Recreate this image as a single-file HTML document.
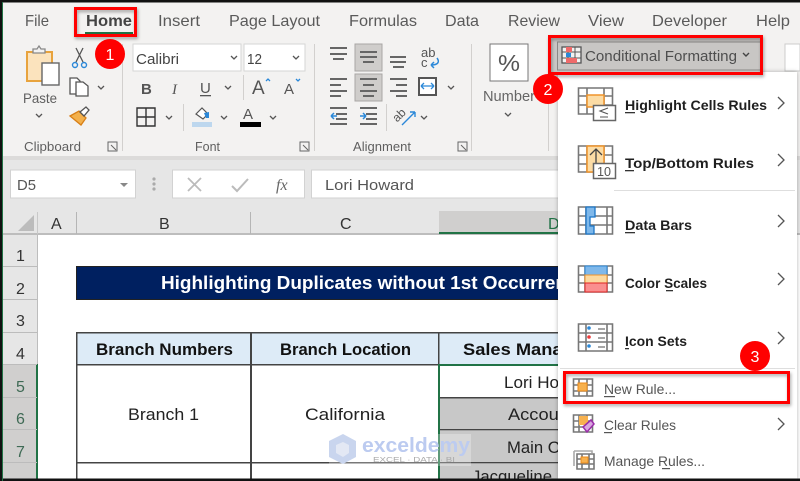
<!DOCTYPE html>
<html><head><meta charset="utf-8"><style>
html,body{margin:0;padding:0;background:#fff;width:800px;height:481px;overflow:hidden}
svg{display:block}
text{font-family:"Liberation Sans",sans-serif}
.t{font-size:16px;fill:#5a5a5a}
.g{font-size:13px;fill:#5f5f5f}
.m{font-size:14px;font-weight:bold;fill:#1f1f1f}
.n{font-size:14px;fill:#555}
.s{font-size:17px;fill:#222}
.b{font-size:17px;font-weight:bold;fill:#111}
.h{font-size:16px;fill:#333}
.ln{stroke:#666;stroke-width:2;fill:none}
.ch{stroke:#555;stroke-width:1.3;fill:none}
</style></head><body>
<svg width="800" height="481" viewBox="0 0 800 481" xmlns="http://www.w3.org/2000/svg">
<defs><filter id="sh" x="-10%" y="-30%" width="120%" height="160%"><feDropShadow dx="1" dy="2" stdDeviation="1.5" flood-color="#000" flood-opacity=".35"/></filter>
<filter id="ms" x="-5%" y="-5%" width="110%" height="110%"><feDropShadow dx="0" dy="0" stdDeviation="2" flood-color="#000" flood-opacity=".3"/></filter></defs>
<rect width="800" height="481" fill="#fff"/>
<!-- ribbon -->
<rect x="0" y="2" width="800" height="156" fill="#f3f2f1"/>
<rect x="0" y="156" width="800" height="4" fill="#dcdbda"/>
<rect x="0" y="160" width="800" height="75" fill="#e6e6e6"/>
<!-- tabs -->
<text class="t" x="25" y="26" textLength="24" lengthAdjust="spacingAndGlyphs">File</text>
<text class="t" x="86" y="26" textLength="46" lengthAdjust="spacingAndGlyphs" style="font-weight:bold;fill:#444">Home</text>
<text class="t" x="158" y="26" textLength="42" lengthAdjust="spacingAndGlyphs">Insert</text>
<text class="t" x="229" y="26" textLength="91" lengthAdjust="spacingAndGlyphs">Page Layout</text>
<text class="t" x="349" y="26" textLength="68" lengthAdjust="spacingAndGlyphs">Formulas</text>
<text class="t" x="445" y="26" textLength="34" lengthAdjust="spacingAndGlyphs">Data</text>
<text class="t" x="508" y="26" textLength="52" lengthAdjust="spacingAndGlyphs">Review</text>
<text class="t" x="588" y="26" textLength="36" lengthAdjust="spacingAndGlyphs">View</text>
<text class="t" x="652" y="26" textLength="75" lengthAdjust="spacingAndGlyphs">Developer</text>
<text class="t" x="756" y="26" textLength="34" lengthAdjust="spacingAndGlyphs">Help</text>
<rect x="85" y="32" width="48" height="2.5" fill="#217346"/>
<rect x="75.500" y="8.500" width="60" height="27" fill="none" stroke="#f00" stroke-width="3" filter="url(#sh)"/>
<!-- clipboard -->
<path d="M27 52h25v29H27z" fill="#fbe3bd" stroke="#e8a33d" stroke-width="2"/>
<path d="M33 52v-3h4l2-3 2 3h4v4h-12z" fill="#f3f2f1" stroke="#888" stroke-width="1.3"/>
<rect x="42" y="63" width="17" height="22" fill="#fff" stroke="#666" stroke-width="1.4"/>
<text class="g" x="23" y="103" textLength="34" lengthAdjust="spacingAndGlyphs" style="font-size:14px">Paste</text>
<path class="ch" d="M36 114l3 3 3-3"/>
<path d="M76 48l7 14M83 48l-7 14" stroke="#555" stroke-width="1.3" fill="none"/>
<circle cx="75" cy="65" r="2.5" fill="none" stroke="#2b88d8" stroke-width="1.4"/><circle cx="84" cy="65" r="2.5" fill="none" stroke="#2b88d8" stroke-width="1.4"/>
<path d="M70 78h7l3 3v13H70z" fill="#fff" stroke="#555" stroke-width="1.3"/><path d="M76 82h7l5 4v10H76z" fill="#fff" stroke="#555" stroke-width="1.3"/>
<path class="ch" d="M98 86l3 3 3-3"/>
<path d="M70 116l9-5 7 7-5 7z" fill="#f3b04b" stroke="#d87f16" stroke-width="1.3"/><path d="M80 112l6-5 3 3-5 6z" fill="#fff" stroke="#555" stroke-width="1.3"/>
<text class="g" x="24" y="151" textLength="57" lengthAdjust="spacingAndGlyphs">Clipboard</text>
<path d="M108 142h9v9h-9zM111 145l5 5" fill="none" stroke="#666"/>
<rect x="122" y="44" width="1" height="107" fill="#d2d0ce"/>
<!-- font -->
<rect x="133" y="44" width="108" height="27" fill="#fff" stroke="#d5d5d5"/>
<text x="136" y="64" textLength="43" lengthAdjust="spacingAndGlyphs" style="font-size:15px;fill:#444">Calibri</text>
<path d="M231 56l3 3 3-3" class="ch" stroke-width="1.5"/>
<rect x="244" y="44" width="61" height="27" fill="#fff" stroke="#d5d5d5"/>
<text x="247" y="64" textLength="15" lengthAdjust="spacingAndGlyphs" style="font-size:15px;fill:#444">12</text>
<path d="M293 56l3 3 3-3" class="ch"/>
<text x="141" y="94" style="font-size:15px;font-weight:bold;fill:#555">B</text>
<text x="172" y="94" style="font-size:15px;font-family:'Liberation Serif';font-style:italic;fill:#555">I</text>
<text x="200" y="93" style="font-size:15px;fill:#555">U</text><rect x="200" y="95" width="11" height="1.3" fill="#555"/>
<path class="ch" d="M225 86l3 3 3-3"/>
<rect x="243" y="75" width="1" height="25" fill="#d2d0ce"/>
<text x="252" y="94" style="font-size:19px;fill:#555">A</text>
<path d="M266 81l2-2 2 2" stroke="#2b88d8" stroke-width="1.3" fill="none"/>
<text x="284" y="94" style="font-size:15px;fill:#555">A</text>
<path d="M296 79l2 2 2-2" stroke="#2b88d8" stroke-width="1.3" fill="none"/>
<path d="M137 108h18v18h-18zM146 108v18M137 117h18" fill="none" stroke="#333" stroke-width="1.4"/>
<path class="ch" d="M166 116l3 3 3-3"/>
<rect x="183" y="104" width="1" height="27" fill="#d2d0ce"/>
<path d="M196 114l6-6 6 6-5 5z" fill="#fff" stroke="#555" stroke-width="1.2"/><path d="M204 113l5-1v6h-3z" fill="#2b88d8"/>
<rect x="192" y="122" width="20" height="5" fill="#bdd7ee"/>
<path class="ch" d="M221 116l3 3 3-3"/>
<text x="243" y="119" style="font-size:15px;fill:#555">A</text>
<rect x="240" y="122" width="21" height="5" fill="#000"/>
<path class="ch" d="M270 116l3 3 3-3"/>
<text class="g" x="195" y="151" textLength="25" lengthAdjust="spacingAndGlyphs">Font</text>
<path d="M300 142h9v9h-9zM303 145l5 5" fill="none" stroke="#666"/>
<rect x="314" y="44" width="1" height="107" fill="#d2d0ce"/>
<!-- alignment -->
<rect x="355" y="44" width="27" height="27" fill="#cfcdcb" stroke="#a9a7a5"/>
<rect x="355" y="74" width="27" height="27" fill="#cfcdcb" stroke="#a9a7a5"/>
<path class="ln" d="M330 48h17M330 54h17M333 59h11"/>
<path class="ln" d="M360 52h17M360 57h17M363 62h11"/>
<path class="ln" d="M390 57h16M390 62h16M393 67h11"/>
<path class="ln" d="M330 79h17M330 85h11M330 91h17M330 96h11"/>
<path class="ln" d="M360 79h17M363 85h11M360 91h17M363 96h11"/>
<path class="ln" d="M390 79h17M396 85h11M390 91h17M396 96h11"/>
<path class="ln" d="M330 108h17M336 114h11M336 119h11M330 124h17" stroke-width="1.7"/>
<path d="M331 116h6M331 116l3-3M331 116l3 3" stroke="#2b88d8" stroke-width="1.5" fill="none"/>
<path class="ln" d="M360 108h17M366 114h11M366 119h11M360 124h17" stroke-width="1.7"/>
<path d="M360 116h6M366 116l-3-3M366 116l-3 3" stroke="#2b88d8" stroke-width="1.5" fill="none"/>
<rect x="386" y="104" width="1" height="27" fill="#d2d0ce"/>
<text x="421" y="57" style="font-size:13px;fill:#555">ab</text><text x="421" y="67" style="font-size:13px;fill:#555">c</text>
<path d="M437 58c3 4 1 7-6 7M431 65l3-3M431 65l3 3" stroke="#2b88d8" stroke-width="1.5" fill="none"/>
<rect x="419" y="78" width="17" height="17" fill="#fff" stroke="#555" stroke-width="2"/>
<path d="M421 86h13M421 86l3-3M421 86l3 3M434 86l-3-3M434 86l-3 3" stroke="#2b88d8" stroke-width="1.3" fill="none"/>
<path class="ch" d="M448 86l3 3 3-3"/>
<text x="394" y="119" transform="rotate(-45 400 117)" style="font-size:12px;fill:#555">ab</text>
<path d="M402 125l13-13M415 112h-5M415 112v5" stroke="#2b88d8" stroke-width="1.4" fill="none"/>
<path class="ch" d="M421 116l3 3 3-3"/>
<text class="g" x="353" y="151" textLength="58" lengthAdjust="spacingAndGlyphs">Alignment</text>
<path d="M458 142h9v9h-9zM461 145l5 5" fill="none" stroke="#666"/>
<rect x="471" y="44" width="1" height="107" fill="#d2d0ce"/>
<!-- number -->
<rect x="490" y="44" width="38" height="37" fill="#fff" stroke="#777"/>
<text x="498" y="71" textLength="22" lengthAdjust="spacingAndGlyphs" style="font-size:23px;fill:#555">%</text>
<text x="483" y="101" textLength="52" lengthAdjust="spacingAndGlyphs" style="font-size:15px;fill:#666">Number</text>
<path class="ch" d="M505 113l3 3 3-3"/>
<rect x="548" y="44" width="1" height="107" fill="#d2d0ce"/>
<!-- right ribbon stub -->
<rect x="785" y="44" width="15" height="27" fill="#fff" stroke="#ccc"/>
<!-- formula bar -->
<rect x="10.500" y="170" width="125" height="28" fill="#fff" stroke="#d2d2d2"/>
<text x="17" y="190" textLength="19" lengthAdjust="spacingAndGlyphs" style="font-size:15px;fill:#555">D5</text>
<path d="M120 183h8l-4 4z" fill="#888"/>
<circle cx="154" cy="179" r="1.6" fill="#aaa"/><circle cx="154" cy="184" r="1.6" fill="#aaa"/><circle cx="154" cy="189" r="1.6" fill="#aaa"/>
<rect x="172.500" y="170" width="132" height="28" fill="#fff" stroke="#d2d2d2"/>
<path d="M188 178l13 13M201 178l-13 13" stroke="#bbb" stroke-width="1.8"/>
<path d="M232 186l5 5 11-12" stroke="#bbb" stroke-width="2" fill="none"/>
<text x="276" y="190" style="font-size:16px;font-style:italic;font-family:'Liberation Serif';fill:#666">fx</text>
<rect x="311.500" y="170" width="260" height="28" fill="#fff" stroke="#d2d2d2"/>
<text x="325" y="190" textLength="89" lengthAdjust="spacingAndGlyphs" style="font-size:15px;fill:#555">Lori Howard</text>
<!-- col headers -->
<rect x="0" y="233" width="800" height="2" fill="#bdbdbd"/>
<path d="M18 231l16-16v16z" fill="#bcbcbc"/>
<rect x="37" y="212" width="1" height="22" fill="#c8c8c8"/><rect x="76" y="212" width="1" height="22" fill="#b5b5b5"/><rect x="250" y="212" width="1" height="22" fill="#b5b5b5"/>
<rect x="439" y="211" width="120" height="23" fill="#d0cfce"/><rect x="439" y="232" width="120" height="2" fill="#217346"/>
<text class="h" x="51" y="229">A</text><text class="h" x="159" y="229">B</text><text class="h" x="340" y="229">C</text>
<text class="h" x="548" y="229" style="fill:#217346">D</text>
<!-- row headers -->
<rect x="3" y="235" width="34" height="130" fill="#e6e6e6"/>
<rect x="3" y="365" width="34" height="116" fill="#d0cfce"/>
<rect x="37" y="235" width="1" height="130" fill="#bdbdbd"/>
<rect x="36" y="364" width="2" height="117" fill="#217346"/>
<g fill="#bcbcbc"><rect x="3" y="266" width="34" height="1"/><rect x="3" y="299" width="34" height="1"/><rect x="3" y="332" width="34" height="1"/><rect x="3" y="364" width="34" height="1"/><rect x="3" y="397" width="34" height="1"/><rect x="3" y="429" width="34" height="1"/><rect x="3" y="462" width="34" height="1"/></g>
<text class="h" x="16" y="261">1</text><text class="h" x="16" y="294">2</text><text class="h" x="16" y="326">3</text><text class="h" x="16" y="359">4</text>
<text class="h" x="16" y="392" style="fill:#3f6a55">5</text><text class="h" x="16" y="424" style="fill:#3f6a55">6</text><text class="h" x="16" y="457" style="fill:#3f6a55">7</text>
<!-- sheet -->
<rect x="76.500" y="266.500" width="490" height="33" fill="#002060" stroke="#222"/>
<text x="161" y="289" textLength="427" lengthAdjust="spacingAndGlyphs" style="font-size:18px;font-weight:bold;fill:#fff">Highlighting Duplicates without 1st Occurrence</text>
<rect x="77" y="333" width="490" height="31" fill="#ddebf7"/>
<text class="b" x="96" y="355" textLength="137" lengthAdjust="spacingAndGlyphs">Branch Numbers</text>
<text class="b" x="280" y="355" textLength="131" lengthAdjust="spacingAndGlyphs">Branch Location</text>
<text class="b" x="463" y="355" textLength="128" lengthAdjust="spacingAndGlyphs">Sales Manager</text>
<text class="s" x="128" y="420" textLength="71" lengthAdjust="spacingAndGlyphs">Branch 1</text>
<text class="s" x="305" y="420" textLength="80" lengthAdjust="spacingAndGlyphs">California</text>
<rect x="440" y="398" width="127" height="31" fill="#c8c8c8"/>
<rect x="440" y="431" width="127" height="31" fill="#c8c8c8"/>
<rect x="440" y="464" width="127" height="17" fill="#c8c8c8"/>
<text class="s" x="504" y="388" textLength="92" lengthAdjust="spacingAndGlyphs">Lori Howard</text>
<text class="s" x="508" y="420" textLength="66" lengthAdjust="spacingAndGlyphs">Account</text>
<text class="s" x="507" y="453" textLength="84" lengthAdjust="spacingAndGlyphs">Main Office</text>
<text class="s" x="472" y="482" textLength="80" lengthAdjust="spacingAndGlyphs">Jacqueline</text>
<g fill="#444">
<rect x="76" y="332" width="491" height="1.500"/>
<rect x="76" y="364" width="363" height="1.500"/>
<rect x="76" y="462" width="363" height="1.500"/>
<rect x="76" y="332" width="1.500" height="149"/>
<rect x="250" y="332" width="2" height="149"/>
<rect x="438" y="332" width="1.500" height="33"/>
<rect x="440" y="397" width="127" height="1.500"/>
<rect x="440" y="429" width="127" height="1.500"/>
<rect x="440" y="462" width="127" height="1.500"/>
</g>
<rect x="438" y="364" width="129" height="2" fill="#217346"/>
<rect x="438" y="364" width="2" height="117" fill="#217346"/>
<!-- watermark -->
<rect x="329" y="434" width="142" height="32" fill="#fff" opacity=".28"/>
<path d="M329 441l14-7 13 7v16l-13 7-14-7z" fill="#c9d5ee"/>
<path d="M336 445l7-3 6 3v8l-6 4-7-4z" fill="#e3e8f4"/>
<text x="362" y="452" textLength="108" lengthAdjust="spacingAndGlyphs" style="font-size:20px;font-weight:bold;fill:#bccbf0">exceldemy</text>
<text x="373" y="462" textLength="82" lengthAdjust="spacingAndGlyphs" style="font-size:7px;fill:#aaa">EXCEL · DATA · BI</text>
<!-- menu -->
<rect x="558" y="72" width="239" height="407" fill="#fff" filter="url(#ms)"/>
<!-- CF button -->
<rect x="550" y="38" width="211" height="35" fill="#c8c6c4"/>
<rect x="557.500" y="42" width="203" height="28" fill="#c8c6c4" stroke="#8a8886"/>
<rect x="562" y="47" width="19" height="16" fill="#f3f2f1" stroke="#555" stroke-width="1.300"/>
<path d="M562 52h19M562 58h19M568 47v16M575 47v16" stroke="#555" fill="none"/>
<rect x="566" y="47" width="6" height="5" fill="#ef6a6a"/><rect x="566" y="53" width="5" height="4" fill="#2b88d8"/><rect x="566" y="58" width="11" height="5" fill="#ef6a6a"/>
<text x="585" y="61" textLength="152" lengthAdjust="spacingAndGlyphs" style="font-size:15px;fill:#4e4e4e">Conditional Formatting</text>
<path d="M743 53l3 3 3-3" stroke="#444" stroke-width="1.400" fill="none"/>
<rect x="549.500" y="36.500" width="212" height="37" fill="none" stroke="#f00" stroke-width="3" filter="url(#sh)"/>
<!-- menu icons -->
<g fill="none" stroke="#777" stroke-width="1.600">
<path d="M578.500 88h34v26h-34zM578.500 96h34M578.500 105h34M587 88v26M604 88v26"/>
<path d="M578.500 146h34v26h-34zM578.500 155h34M578.500 164h34M587 146v26M604 146v26"/>
<path d="M578.500 207h34v27h-34zM578.500 216h34M578.500 225h34M586 207v27M607 207v27"/>
<path d="M578.500 266h34v26h-34zM578.500 275h34M578.500 283h34M585 266v26M607 266v26"/>
<path d="M578.500 324h34v27h-34zM578.500 333h34M578.500 342h34M586 324v27M607 324v27"/>
<path d="M573.500 379h19v17h-19zM573.500 385h19M573.500 391h19M579 379v17M587 379v17"/>
<path d="M573.500 415h19v17h-19zM573.500 421h19M573.500 427h19M579 415v17M587 415v17"/>
<path d="M574 451h18v2M574 451v15" stroke="#aaa"/>
<path d="M577 454h17v15h-17zM577 459h17M577 464h17M582 454v15M589 454v15"/>
</g>
<rect x="587" y="95" width="17" height="12" fill="#fcdca5" stroke="#f0932b" stroke-width="1.500"/>
<rect x="593.500" y="105.500" width="22" height="15" fill="#fff" stroke="#666" stroke-width="1.500"/>
<path d="M608 108l-8 3 8 3M600 117h8" stroke="#555" stroke-width="1.100" fill="none"/>
<rect x="587" y="146" width="17" height="26" fill="#fcdca5" stroke="#f0932b" stroke-width="1.500"/>
<path d="M596 163v-14M590 155l6-6 6 6" stroke="#444" stroke-width="1.300" fill="none"/>
<rect x="593.500" y="163.500" width="22" height="15" fill="#fff" stroke="#666" stroke-width="1.500"/>
<text x="597" y="176" textLength="14" lengthAdjust="spacingAndGlyphs" style="font-size:13px;fill:#555">10</text>
<path d="M586 207h9v10h-5v9h4v8h-8z" fill="#7fb8ea" stroke="#1b76c7" stroke-width="1.300"/>
<rect x="585" y="266" width="22" height="9" fill="#7fb8ea" stroke="#2b88d8"/>
<rect x="585" y="275" width="22" height="8" fill="#fcd99f" stroke="#f0932b"/>
<rect x="585" y="283" width="22" height="9" fill="#fa8f8f" stroke="#e02525"/>
<circle cx="589" cy="328" r="1.800" fill="#2b88d8"/><circle cx="589" cy="337" r="1.800" fill="#ef3b3b"/><circle cx="589" cy="346" r="1.800" fill="#2b88d8"/>
<path d="M598 329h7M598 338h7M598 347h7" stroke="#888" stroke-width="1.500"/>
<rect x="578" y="383" width="9" height="8" fill="#f7b14e" stroke="#ec8b1a"/>
<path d="M579 416h9v9h-9z" fill="#f7b14e"/>
<path d="M583 427l8-7 3 4-7 8z" fill="#d9a6e0" stroke="#9a2da8" stroke-width="1.500"/>
<rect x="581" y="457" width="7" height="6" fill="#f7b14e" stroke="#ec8b1a"/>
<!-- menu text -->
<text class="m" x="625" y="110" textLength="142" lengthAdjust="spacingAndGlyphs">Highlight Cells Rules</text><rect x="625" y="112" width="10" height="1.300" fill="#333"/>
<text class="m" x="625" y="168" textLength="129" lengthAdjust="spacingAndGlyphs">Top/Bottom Rules</text><rect x="625" y="170" width="9" height="1.300" fill="#333"/>
<text class="m" x="625" y="230" textLength="67" lengthAdjust="spacingAndGlyphs">Data Bars</text><rect x="625" y="232" width="10" height="1.300" fill="#333"/>
<text class="m" x="625" y="288" textLength="82" lengthAdjust="spacingAndGlyphs">Color Scales</text><rect x="666" y="290" width="7" height="1.300" fill="#333"/>
<text class="m" x="625" y="346" textLength="62" lengthAdjust="spacingAndGlyphs">Icon Sets</text><rect x="625" y="348" width="4" height="1.300" fill="#333"/>
<text class="n" x="604" y="394" textLength="72" lengthAdjust="spacingAndGlyphs">New Rule...</text><rect x="604" y="396" width="11" height="1.200" fill="#555"/>
<text class="n" x="604" y="430" textLength="72" lengthAdjust="spacingAndGlyphs">Clear Rules</text><rect x="604" y="432" width="8" height="1.200" fill="#555"/>
<text class="n" x="604" y="466" textLength="101" lengthAdjust="spacingAndGlyphs">Manage Rules...</text><rect x="662" y="468" width="8" height="1.200" fill="#555"/>
<g fill="none" stroke="#555" stroke-width="1.300">
<path d="M778 97l6 6-6 6"/><path d="M778 154l6 6-6 6"/><path d="M778 215l6 6-6 6"/><path d="M778 273l6 6-6 6"/><path d="M778 332l6 6-6 6"/><path d="M778 418l6 6-6 6"/>
</g>
<rect x="614" y="190" width="181" height="1" fill="#dedede"/>
<rect x="560" y="368" width="235" height="1" fill="#dedede"/>
<rect x="564.500" y="372.500" width="224" height="30" fill="none" stroke="#f00" stroke-width="3" filter="url(#sh)"/>
<!-- badges -->
<circle cx="110" cy="54" r="15" fill="#f00"/><text x="110" y="60" text-anchor="middle" style="font-size:16px;fill:#fff">1</text>
<circle cx="548" cy="89" r="15" fill="#f00"/><text x="548" y="95" text-anchor="middle" style="font-size:16px;fill:#fff">2</text>
<circle cx="755" cy="356" r="15" fill="#f00"/><text x="755" y="362" text-anchor="middle" style="font-size:16px;fill:#fff">3</text>
<!-- borders -->
<rect x="0" y="0" width="800" height="2.500" fill="#111"/>
<rect x="0" y="478.500" width="800" height="2.500" fill="#111"/>
<rect x="0" y="0" width="2" height="481" fill="#111"/>
<rect x="2" y="2" width="1" height="479" fill="#217346"/>
</svg>
</body></html>
